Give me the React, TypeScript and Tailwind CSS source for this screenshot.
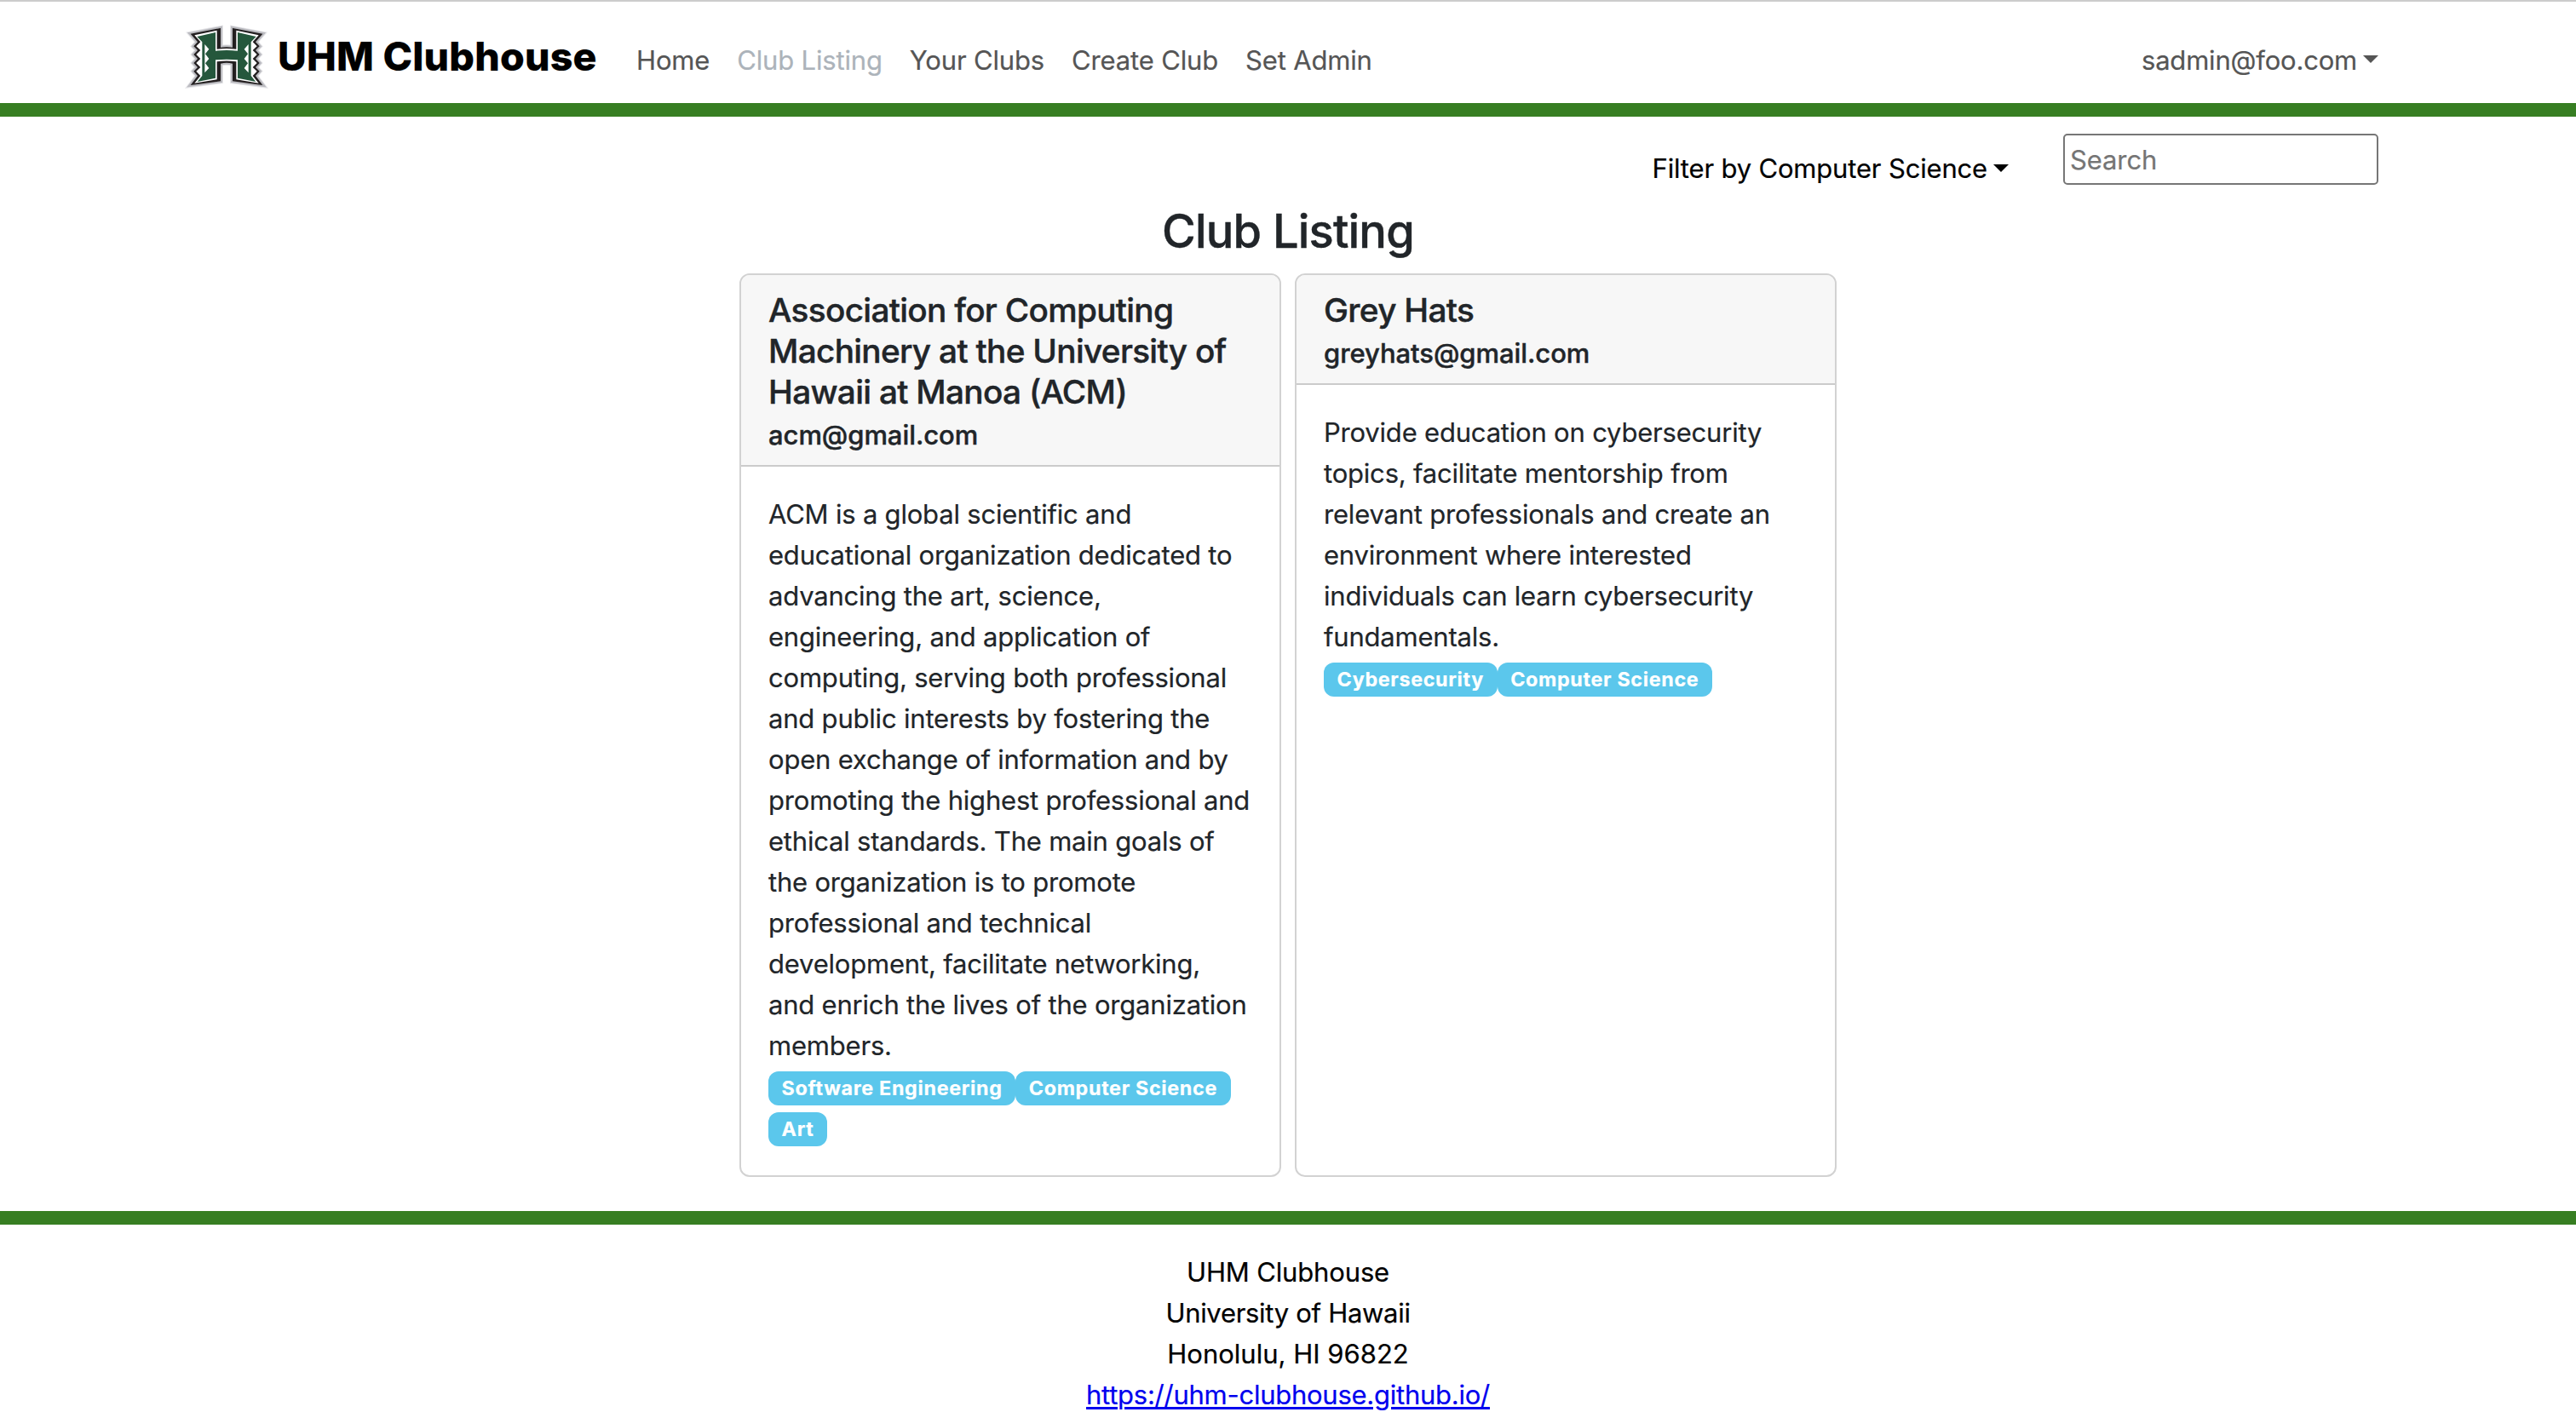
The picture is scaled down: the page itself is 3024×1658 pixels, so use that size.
function Logo() {
  const outline =
    "M41 59 L147 39 V107 Q168 104 189 107 V39 L295 59 L270 88 L284 103 L270 117 L284 132 L270 147 L284 162 L270 177 L284 191 L270 207 L295 240 L189 226 V164 Q168 159 147 164 V226 L41 240 L66 207 L52 191 L66 177 L52 162 L66 147 L52 132 L66 117 L52 103 L66 88 Z";
  return (
    <svg viewBox="0 0 330 270" className="h-[90px] w-[110px] shrink-0" aria-label="University of Hawaii logo">
      <path d={outline} fill="#e6e6e9" stroke="#e6e6e9" strokeWidth="18" strokeMiterlimit="3" />
      <path d={outline} fill="#bbbbc0" stroke="#bbbbc0" strokeWidth="12" strokeMiterlimit="5" />
      <path d={outline} fill="#231f20" />
      <path
        d="M55 64 L134 47 V113 Q168 109 202 113 V47 L281 64 L260 88 L275 103 L260 117 L275 132 L260 147 L275 162 L260 177 L275 191 L260 207 L281 233 L202 220 V157 Q168 152 134 157 V220 L55 233 L76 207 L61 191 L76 177 L61 162 L76 147 L61 132 L76 117 L61 103 L76 88 Z"
        fill="#fff"
      />
      <path
        d="M64 69 L129 54 V119 Q168 115 207 119 V54 L272 69 L254 88 V207 L271 228 L207 215 V151 Q168 147 129 151 V215 L65 228 L82 207 V88 Z"
        fill="#25573c"
      />
      <path d="M91 96 L106 113 L93 130 L106 147 L93 163 L106 180 L91 196 Z" fill="#fff" />
      <path d="M245 96 L230 113 L243 130 L230 147 L243 163 L230 180 L245 196 Z" fill="#fff" />
    </svg>
  );
}

function Caret({ className }: { className: string }) {
  return (
    <span
      className={`inline-block h-0 w-0 border-x-[9.6px] border-t-[9.6px] border-x-transparent ${className}`}
    />
  );
}

interface Club {
  name: string;
  email: string;
  description: string;
  tags: string[];
}

const clubs: Club[] = [
  {
    name: "Association for Computing\nMachinery at the University of\nHawaii at Manoa (ACM)",
    email: "acm@gmail.com",
    description:
      "ACM is a global scientific and\neducational organization dedicated to\nadvancing the art, science,\nengineering, and application of\ncomputing, serving both professional\nand public interests by fostering the\nopen exchange of information and by\npromoting the highest professional and\nethical standards. The main goals of\nthe organization is to promote\nprofessional and technical\ndevelopment, facilitate networking,\nand enrich the lives of the organization\nmembers.",
    tags: ["Software Engineering", "Computer Science", "Art"],
  },
  {
    name: "Grey Hats",
    email: "greyhats@gmail.com",
    description:
      "Provide education on cybersecurity\ntopics, facilitate mentorship from\nrelevant professionals and create an\nenvironment where interested\nindividuals can learn cybersecurity\nfundamentals.",
    tags: ["Cybersecurity", "Computer Science"],
  },
];

function ClubCard({ club }: { club: Club }) {
  return (
    <article className="flex w-[636px] flex-col overflow-hidden rounded-xl border-2 border-[#d2d2d2] bg-white">
      <header className="border-b-2 border-[#cbcbcb] bg-[#f7f7f7] px-8 pt-[17px] pb-[15px] font-medium [-webkit-text-stroke:0.4px]">
        <h2 className="mb-2 text-[38.75px] leading-[48px] tracking-[-0.7px] whitespace-pre">{club.name}</h2>
        <h3 className="text-[31px] leading-[38.4px] tracking-[-0.06px]">{club.email}</h3>
      </header>
      <div className="p-8">
        <p className="text-[31px] leading-[48px] tracking-[-0.2px] whitespace-pre">{club.description}</p>
        <div className="flex flex-wrap gap-y-2 pt-[6.6px] pb-[1.4px]">
          {club.tags.map((tag) => (
            <span
              key={tag}
              className="h-10 rounded-xl bg-[#5bc7ec] px-[15.6px] text-[23.3px] leading-[40px] font-bold tracking-[0.67px] whitespace-nowrap text-white"
            >
              {tag}
            </span>
          ))}
        </div>
      </div>
    </article>
  );
}

const links = ["Home", "Club Listing", "Your Clubs", "Create Club", "Set Admin"];

export default function App() {
  return (
    <div className="flex h-[1658px] w-[3024px] flex-col overflow-hidden bg-white font-['Inter',sans-serif] text-[31px] leading-[48px] text-[#212529] [-webkit-text-stroke:0.2px]">
      <nav className="flex h-[137px] shrink-0 items-start border-t-2 border-b-[16px] border-t-[#cccccc] border-b-[#377e22] pr-[232px] pl-[210px]">
        <div className="flex pt-[18px]">
          <Logo />
          <span className="w-[427px] pt-[10px] pl-[6px] text-[46.5px] leading-[72px] font-extrabold tracking-[0.2px] whitespace-nowrap text-black">
            UHM Clubhouse
          </span>
        </div>
        <div className="flex flex-1 gap-8 pt-[45px] tracking-[-0.16px] whitespace-nowrap text-[#555555]">
          {links.map((link) => (
            <a key={link} className={link === "Club Listing" ? "text-[#acb3ba]" : ""}>
              {link}
            </a>
          ))}
        </div>
        <div className="flex items-center gap-[7px] pt-[45px] tracking-[-0.2px] text-[#555555]">
          sadmin@foo.com
          <Caret className="mb-[3px] border-t-[#555555]" />
        </div>
      </nav>

      <div className="flex h-[101px] shrink-0 items-start justify-end gap-[64px] pt-5 pr-[232px]">
        <div className="flex items-center gap-[7px] pt-[17px] tracking-[-0.17px] text-black">
          Filter by Computer Science
          <Caret className="mb-[2px] border-t-black" />
        </div>
        <input
          placeholder="Search"
          className="h-[60px] w-[370px] rounded-[5px] border-2 border-[#767676] px-[6px] text-[31px] leading-[48px] tracking-[-0.1px] placeholder:text-[#757575]"
        />
      </div>

      <main className="flex shrink-0 flex-col items-center pb-10">
        <h1 className="mb-4 text-[54.25px] leading-[67.2px] font-medium tracking-[-0.85px] [-webkit-text-stroke:0.4px]">
          Club Listing
        </h1>
        <div className="flex gap-4">
          {clubs.map((club) => (
            <ClubCard key={club.name} club={club} />
          ))}
        </div>
      </main>

      <footer className="flex shrink-0 flex-col items-center border-t-[16px] border-[#377e22] pt-8 text-black">
        <span className="tracking-[-0.15px]">UHM Clubhouse</span>
        <span className="tracking-[-0.3px]">University of Hawaii</span>
        <span>Honolulu, HI 96822</span>
        <a className="tracking-[-0.26px] text-[#0000ee] underline decoration-[3px] underline-offset-[3px]">
          https://uhm-clubhouse.github.io/
        </a>
      </footer>
    </div>
  );
}
